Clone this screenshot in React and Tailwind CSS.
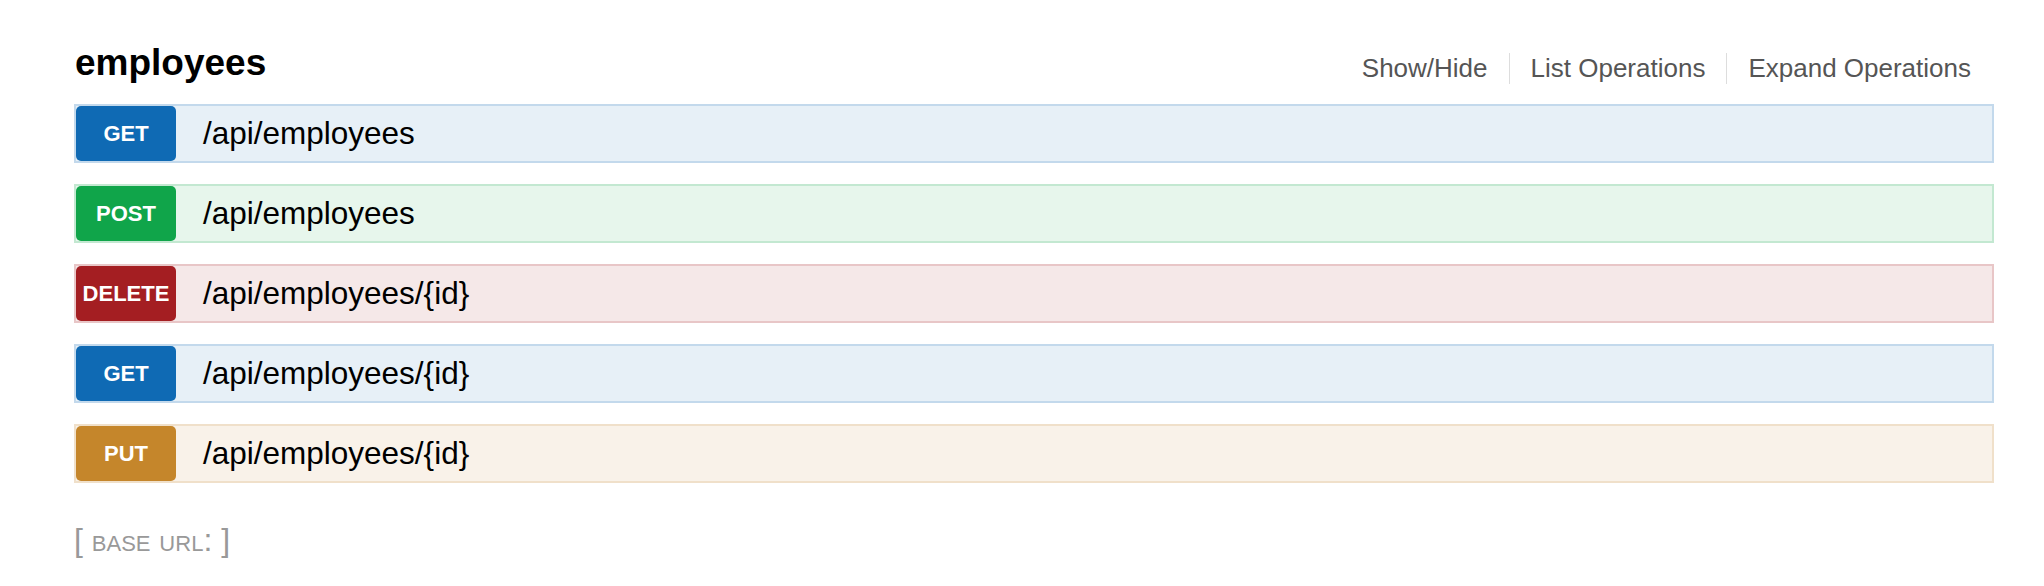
import React from 'react';

const operations = [
    { method: 'GET', path: '/api/employees', row: 'bg-[#e7f0f7] border-[#c3d9ec]', badge: 'bg-[#0f6ab4]' },
    { method: 'POST', path: '/api/employees', row: 'bg-[#e7f6ec] border-[#c3e8d1]', badge: 'bg-[#10a54a]' },
    { method: 'DELETE', path: '/api/employees/{id}', row: 'bg-[#f5e8e8] border-[#e8c6c7]', badge: 'bg-[#a41e22]' },
    { method: 'GET', path: '/api/employees/{id}', row: 'bg-[#e7f0f7] border-[#c3d9ec]', badge: 'bg-[#0f6ab4]' },
    { method: 'PUT', path: '/api/employees/{id}', row: 'bg-[#f9f2e9] border-[#f0e0ca]', badge: 'bg-[#c5862b]' },
];

const App = () => {
    return (
        <div className="min-h-screen bg-white font-['Liberation_Sans',Arial,sans-serif]">
            <div className="ml-[74px] mr-[50px] pt-[45px]">
                <div className="flex justify-between items-start h-[59px]">
                    <h2 className="text-[37px] leading-none font-bold text-black ml-[1px] -mt-[1px]">employees</h2>
                    <ul className="flex mt-[8px] text-[26px] leading-[31px] text-[#555]">
                        <li className="px-[21px]">
                            <a href="#" className="hover:underline">Show/Hide</a>
                        </li>
                        <li className="px-[21px] border-l border-[#ddd]">
                            <a href="#" className="hover:underline">List Operations</a>
                        </li>
                        <li className="pl-[21px] pr-[23px] border-l border-[#ddd]">
                            <a href="#" className="hover:underline">Expand Operations</a>
                        </li>
                    </ul>
                </div>
                <div className="flex flex-col gap-[21px]">
                    {operations.map((op, i) => (
                        <div key={i} className={`flex items-center h-[59px] border-2 ${op.row}`}>
                            <span className={`flex items-center justify-center w-[100px] h-full rounded-[5px] text-white font-bold text-[22px] ${op.badge}`}>
                                {op.method}
                            </span>
                            <span className="ml-[27px] text-[31.5px] text-black">{op.path}</span>
                        </div>
                    ))}
                </div>
                <div className="mt-[41px] text-[32px] leading-none text-[#999]">
                    [ <span className="[font-variant:small-caps]">base url</span>: ]
                </div>
            </div>
        </div>
    );
};

export default App;
